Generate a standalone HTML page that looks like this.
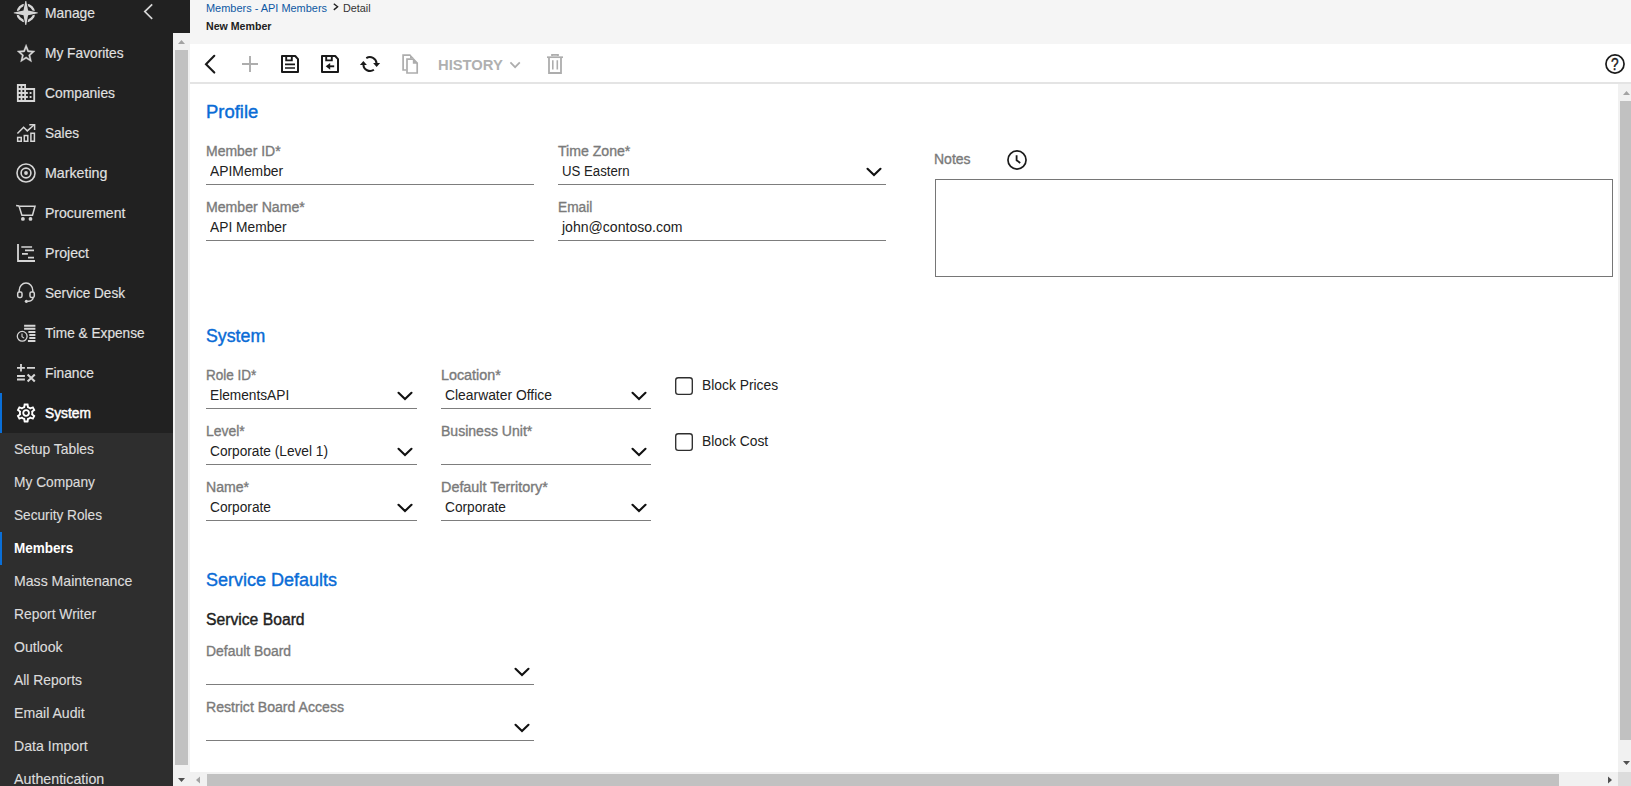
<!DOCTYPE html>
<html lang="en"><head><meta charset="utf-8"><title>Members - API Members &gt; Detail</title>
<style>
html,body{margin:0;padding:0;}
body{width:1631px;height:786px;overflow:hidden;position:relative;background:#fff;font-family:"Liberation Sans", sans-serif;}
.t{position:absolute;white-space:nowrap;line-height:1;transform-origin:0 50%;display:block;}
.b{position:absolute;}
svg{position:absolute;overflow:visible;}

.ul{position:absolute;height:1px;background:#7d7d7d;}

</style></head><body>
<div class="b" style="left:190px;top:0px;width:1441px;height:44px;background:#f5f5f5;"></div>
<div class="b" style="left:190px;top:44px;width:1441px;height:38px;background:#ffffff;"></div>
<div class="b" style="left:190px;top:82px;width:1441px;height:2px;background:#e4e4e4;"></div>
<div class="b" style="left:0px;top:0px;width:190px;height:33px;background:#212121;"></div>
<div class="b" style="left:0px;top:33px;width:173px;height:400px;background:#212121;"></div>
<div class="b" style="left:0px;top:433px;width:173px;height:353px;background:#2e2e2e;"></div>
<div class="b" style="left:0px;top:393px;width:2px;height:40px;background:#0a6fd8;"></div>
<div class="b" style="left:0px;top:532px;width:2px;height:33px;background:#0a6fd8;"></div>
<div class="b" style="left:173px;top:33px;width:17px;height:753px;background:#f1f1f1;"></div>
<div class="b" style="left:175px;top:50px;width:13px;height:715px;background:#c1c1c1;"></div>
<div class="b" style="left:1618px;top:84px;width:13px;height:688px;background:#f1f1f1;"></div>
<div class="b" style="left:1620px;top:101px;width:11px;height:639px;background:#c1c1c1;"></div>
<div class="b" style="left:190px;top:772px;width:1428px;height:14px;background:#f1f1f1;"></div>
<div class="b" style="left:207px;top:774px;width:1352px;height:12px;background:#c1c1c1;"></div>
<div class="b" style="left:1618px;top:772px;width:13px;height:14px;background:#dcdcdc;"></div>
<div class="ul" style="left:206px;top:184px;width:328px"></div>
<div class="ul" style="left:558px;top:184px;width:328px"></div>
<div class="ul" style="left:206px;top:240px;width:328px"></div>
<div class="ul" style="left:558px;top:240px;width:328px"></div>
<div class="ul" style="left:206px;top:408px;width:211px"></div>
<div class="ul" style="left:441px;top:408px;width:210px"></div>
<div class="ul" style="left:206px;top:464px;width:211px"></div>
<div class="ul" style="left:441px;top:464px;width:210px"></div>
<div class="ul" style="left:206px;top:520px;width:211px"></div>
<div class="ul" style="left:441px;top:520px;width:210px"></div>
<div class="ul" style="left:206px;top:684px;width:328px"></div>
<div class="ul" style="left:206px;top:740px;width:328px"></div>
<div class="b" style="left:935px;top:179px;width:676px;height:96px;border:1px solid #767676;background:#fff"></div>
<span class="t" id="t0" style="left:45.3px;top:5.00px;font-size:15px;font-weight:400;color:#e2e2e2;transform:scale(0.9222,1.0);-webkit-text-stroke:0.15px #e2e2e2;">Manage</span>
<span class="t" id="t1" style="left:45.3px;top:45.00px;font-size:15px;font-weight:400;color:#e2e2e2;transform:scale(0.9155,1.0);-webkit-text-stroke:0.15px #e2e2e2;">My Favorites</span>
<span class="t" id="t2" style="left:45.3px;top:85.00px;font-size:15px;font-weight:400;color:#e2e2e2;transform:scale(0.9226,1.0);-webkit-text-stroke:0.15px #e2e2e2;">Companies</span>
<span class="t" id="t3" style="left:45.3px;top:125.00px;font-size:15px;font-weight:400;color:#e2e2e2;transform:scale(0.9059,1.0);-webkit-text-stroke:0.15px #e2e2e2;">Sales</span>
<span class="t" id="t4" style="left:45.3px;top:165.00px;font-size:15px;font-weight:400;color:#e2e2e2;transform:scale(0.9475,1.0);-webkit-text-stroke:0.15px #e2e2e2;">Marketing</span>
<span class="t" id="t5" style="left:45.3px;top:205.00px;font-size:15px;font-weight:400;color:#e2e2e2;transform:scale(0.9362,1.0);-webkit-text-stroke:0.15px #e2e2e2;">Procurement</span>
<span class="t" id="t6" style="left:45.3px;top:245.00px;font-size:15px;font-weight:400;color:#e2e2e2;transform:scale(0.9424,1.0);-webkit-text-stroke:0.15px #e2e2e2;">Project</span>
<span class="t" id="t7" style="left:45.3px;top:285.00px;font-size:15px;font-weight:400;color:#e2e2e2;transform:scale(0.9054,1.0);-webkit-text-stroke:0.15px #e2e2e2;">Service Desk</span>
<span class="t" id="t8" style="left:45.3px;top:325.00px;font-size:15px;font-weight:400;color:#e2e2e2;transform:scale(0.9096,1.0);-webkit-text-stroke:0.15px #e2e2e2;">Time &amp; Expense</span>
<span class="t" id="t9" style="left:45.3px;top:365.00px;font-size:15px;font-weight:400;color:#e2e2e2;transform:scale(0.9180,1.0);-webkit-text-stroke:0.15px #e2e2e2;">Finance</span>
<span class="t" id="t10" style="left:45.3px;top:405.00px;font-size:15px;font-weight:400;color:#ffffff;transform:scale(0.9197,1.0);-webkit-text-stroke:0.5px #ffffff;">System</span>
<span class="t" id="t11" style="left:14.2px;top:441.00px;font-size:15px;font-weight:400;color:#dcdcdc;transform:scale(0.9252,1.0);-webkit-text-stroke:0.15px #dcdcdc;">Setup Tables</span>
<span class="t" id="t12" style="left:14.2px;top:474.00px;font-size:15px;font-weight:400;color:#dcdcdc;transform:scale(0.9167,1.0);-webkit-text-stroke:0.15px #dcdcdc;">My Company</span>
<span class="t" id="t13" style="left:14.2px;top:507.00px;font-size:15px;font-weight:400;color:#dcdcdc;transform:scale(0.9100,1.0);-webkit-text-stroke:0.15px #dcdcdc;">Security Roles</span>
<span class="t" id="t14" style="left:14.2px;top:540.00px;font-size:15px;font-weight:700;color:#ffffff;transform:scale(0.9019,1.0);">Members</span>
<span class="t" id="t15" style="left:14.2px;top:573.00px;font-size:15px;font-weight:400;color:#dcdcdc;transform:scale(0.9396,1.0);-webkit-text-stroke:0.15px #dcdcdc;">Mass Maintenance</span>
<span class="t" id="t16" style="left:14.2px;top:606.00px;font-size:15px;font-weight:400;color:#dcdcdc;transform:scale(0.9222,1.0);-webkit-text-stroke:0.15px #dcdcdc;">Report Writer</span>
<span class="t" id="t17" style="left:14.2px;top:639.00px;font-size:15px;font-weight:400;color:#dcdcdc;transform:scale(0.9380,1.0);-webkit-text-stroke:0.15px #dcdcdc;">Outlook</span>
<span class="t" id="t18" style="left:14.2px;top:672.00px;font-size:15px;font-weight:400;color:#dcdcdc;transform:scale(0.9269,1.0);-webkit-text-stroke:0.15px #dcdcdc;">All Reports</span>
<span class="t" id="t19" style="left:14.2px;top:705.00px;font-size:15px;font-weight:400;color:#dcdcdc;transform:scale(0.9407,1.0);-webkit-text-stroke:0.15px #dcdcdc;">Email Audit</span>
<span class="t" id="t20" style="left:14.2px;top:738.00px;font-size:15px;font-weight:400;color:#dcdcdc;transform:scale(0.9416,1.0);-webkit-text-stroke:0.15px #dcdcdc;">Data Import</span>
<span class="t" id="t21" style="left:14.2px;top:771.00px;font-size:15px;font-weight:400;color:#dcdcdc;transform:scale(0.9497,1.0);-webkit-text-stroke:0.15px #dcdcdc;">Authentication</span>
<span class="t" id="t22" style="left:206.2px;top:3.00px;font-size:11px;font-weight:400;color:#0d58a3;transform:scale(0.9947,1.0);">Members - API Members</span>
<span class="t" id="t23" style="left:343.4px;top:3.00px;font-size:11px;font-weight:400;color:#333333;transform:scale(0.9813,1.0);">Detail</span>
<span class="t" id="t24" style="left:206.2px;top:21.00px;font-size:11px;font-weight:700;color:#212121;transform:scale(0.9652,1.0);">New Member</span>
<span class="t" id="t25" style="left:438.4px;top:57.00px;font-size:15px;font-weight:700;color:#b0b0b0;transform:scale(0.9839,1.0);">HISTORY</span>
<span class="t" id="t26" style="left:206.4px;top:103.00px;font-size:18px;font-weight:400;color:#0a6cd6;transform:scale(1.0249,1.0);-webkit-text-stroke:0.4px #0a6cd6;">Profile</span>
<span class="t" id="t27" style="left:206.2px;top:144.00px;font-size:14px;font-weight:400;color:#7a7a7a;transform:scale(0.9988,1.0);-webkit-text-stroke:0.35px #7a7a7a;">Member ID*</span>
<span class="t" id="t28" style="left:210.4px;top:164.00px;font-size:14px;font-weight:400;color:#212121;transform:scale(0.9902,1.0);">APIMember</span>
<span class="t" id="t29" style="left:206.2px;top:200.00px;font-size:14px;font-weight:400;color:#7a7a7a;transform:scale(1.0078,1.0);-webkit-text-stroke:0.35px #7a7a7a;">Member Name*</span>
<span class="t" id="t30" style="left:210.4px;top:220.00px;font-size:14px;font-weight:400;color:#212121;transform:scale(0.9844,1.0);">API Member</span>
<span class="t" id="t31" style="left:558.4px;top:144.00px;font-size:14px;font-weight:400;color:#7a7a7a;transform:scale(1.0064,1.0);-webkit-text-stroke:0.35px #7a7a7a;">Time Zone*</span>
<span class="t" id="t32" style="left:562.2px;top:164.00px;font-size:14px;font-weight:400;color:#212121;transform:scale(0.9442,1.0);">US Eastern</span>
<span class="t" id="t33" style="left:558.4px;top:200.00px;font-size:14px;font-weight:400;color:#7a7a7a;transform:scale(0.9796,1.0);-webkit-text-stroke:0.35px #7a7a7a;">Email</span>
<span class="t" id="t34" style="left:562.2px;top:220.00px;font-size:14px;font-weight:400;color:#212121;transform:scale(1.0036,1.0);">john@contoso.com</span>
<span class="t" id="t35" style="left:934.4px;top:152.00px;font-size:14px;font-weight:400;color:#7a7a7a;transform:scale(1.0006,1.0);-webkit-text-stroke:0.35px #7a7a7a;">Notes</span>
<span class="t" id="t36" style="left:206.4px;top:327.00px;font-size:18px;font-weight:400;color:#0a6cd6;transform:scale(0.9864,1.0);-webkit-text-stroke:0.4px #0a6cd6;">System</span>
<span class="t" id="t37" style="left:206.2px;top:368.00px;font-size:14px;font-weight:400;color:#7a7a7a;transform:scale(0.9666,1.0);-webkit-text-stroke:0.35px #7a7a7a;">Role ID*</span>
<span class="t" id="t38" style="left:210.2px;top:388.00px;font-size:14px;font-weight:400;color:#212121;transform:scale(0.9785,1.0);">ElementsAPI</span>
<span class="t" id="t39" style="left:206.2px;top:424.00px;font-size:14px;font-weight:400;color:#7a7a7a;transform:scale(0.9969,1.0);-webkit-text-stroke:0.35px #7a7a7a;">Level*</span>
<span class="t" id="t40" style="left:210.2px;top:444.00px;font-size:14px;font-weight:400;color:#212121;transform:scale(0.9782,1.0);">Corporate (Level 1)</span>
<span class="t" id="t41" style="left:206.2px;top:480.00px;font-size:14px;font-weight:400;color:#7a7a7a;transform:scale(1.0071,1.0);-webkit-text-stroke:0.35px #7a7a7a;">Name*</span>
<span class="t" id="t42" style="left:210.2px;top:500.00px;font-size:14px;font-weight:400;color:#212121;transform:scale(0.9797,1.0);">Corporate</span>
<span class="t" id="t43" style="left:441.2px;top:368.00px;font-size:14px;font-weight:400;color:#7a7a7a;transform:scale(1.0241,1.0);-webkit-text-stroke:0.35px #7a7a7a;">Location*</span>
<span class="t" id="t44" style="left:445.2px;top:388.00px;font-size:14px;font-weight:400;color:#212121;transform:scale(0.9907,1.0);">Clearwater Office</span>
<span class="t" id="t45" style="left:441.2px;top:424.00px;font-size:14px;font-weight:400;color:#7a7a7a;transform:scale(1.0028,1.0);-webkit-text-stroke:0.35px #7a7a7a;">Business Unit*</span>
<span class="t" id="t46" style="left:441.2px;top:480.00px;font-size:14px;font-weight:400;color:#7a7a7a;transform:scale(1.0268,1.0);-webkit-text-stroke:0.35px #7a7a7a;">Default Territory*</span>
<span class="t" id="t47" style="left:445.2px;top:500.00px;font-size:14px;font-weight:400;color:#212121;transform:scale(0.9797,1.0);">Corporate</span>
<span class="t" id="t48" style="left:701.8px;top:378.00px;font-size:14px;font-weight:400;color:#212121;transform:scale(0.9879,1.0);">Block Prices</span>
<span class="t" id="t49" style="left:701.8px;top:434.00px;font-size:14px;font-weight:400;color:#212121;transform:scale(0.9892,1.0);">Block Cost</span>
<span class="t" id="t50" style="left:206.4px;top:571.00px;font-size:18px;font-weight:400;color:#0a6cd6;transform:scale(1.0003,1.0);-webkit-text-stroke:0.4px #0a6cd6;">Service Defaults</span>
<span class="t" id="t51" style="left:206.2px;top:612.00px;font-size:16px;font-weight:400;color:#212121;transform:scale(0.9811,1.0);-webkit-text-stroke:0.4px #212121;">Service Board</span>
<span class="t" id="t52" style="left:206.2px;top:644.00px;font-size:14px;font-weight:400;color:#7a7a7a;transform:scale(0.9941,1.0);-webkit-text-stroke:0.35px #7a7a7a;">Default Board</span>
<span class="t" id="t53" style="left:206.2px;top:700.00px;font-size:14px;font-weight:400;color:#7a7a7a;transform:scale(1.0078,1.0);-webkit-text-stroke:0.35px #7a7a7a;">Restrict Board Access</span>
<span class="t" id="t54" style="left:1611.4px;top:57.00px;font-size:16px;font-weight:400;color:#1a1a1a;transform:scale(0.8533,1.0);-webkit-text-stroke:0.4px #1a1a1a;">?</span>
<svg style="left:173px;top:33px" width="17" height="17" viewBox="0 0 17 17"><polygon points="5,11 8.5,7 12,11" fill="#a3a3a3"/></svg>
<svg style="left:173px;top:769px" width="17" height="17" viewBox="0 0 17 17"><polygon points="5,9 12,9 8.5,13" fill="#505050"/></svg>
<svg style="left:1618px;top:84px" width="17" height="17" viewBox="0 0 17 17"><polygon points="5,11 8.5,7 12,11" fill="#a3a3a3"/></svg>
<svg style="left:1618px;top:755px" width="17" height="17" viewBox="0 0 17 17"><polygon points="5,6 12,6 8.5,10" fill="#505050"/></svg>
<svg style="left:190px;top:772px" width="17" height="17" viewBox="0 0 17 17"><polygon points="10,4.5 10,11.5 6,8" fill="#a3a3a3"/></svg>
<svg style="left:1601px;top:772px" width="17" height="17" viewBox="0 0 17 17"><polygon points="7,4.5 7,11.5 11,8" fill="#505050"/></svg>
<svg style="left:866px;top:167px" width="16" height="10" viewBox="0 0 16 10"><polyline points="1.5,1.8 8,8 14.5,1.8" fill="none" stroke="#111" stroke-width="2.1" stroke-linecap="round" stroke-linejoin="miter"/></svg>
<svg style="left:397px;top:391px" width="16" height="10" viewBox="0 0 16 10"><polyline points="1.5,1.8 8,8 14.5,1.8" fill="none" stroke="#111" stroke-width="2.1" stroke-linecap="round" stroke-linejoin="miter"/></svg>
<svg style="left:631px;top:391px" width="16" height="10" viewBox="0 0 16 10"><polyline points="1.5,1.8 8,8 14.5,1.8" fill="none" stroke="#111" stroke-width="2.1" stroke-linecap="round" stroke-linejoin="miter"/></svg>
<svg style="left:397px;top:447px" width="16" height="10" viewBox="0 0 16 10"><polyline points="1.5,1.8 8,8 14.5,1.8" fill="none" stroke="#111" stroke-width="2.1" stroke-linecap="round" stroke-linejoin="miter"/></svg>
<svg style="left:631px;top:447px" width="16" height="10" viewBox="0 0 16 10"><polyline points="1.5,1.8 8,8 14.5,1.8" fill="none" stroke="#111" stroke-width="2.1" stroke-linecap="round" stroke-linejoin="miter"/></svg>
<svg style="left:397px;top:503px" width="16" height="10" viewBox="0 0 16 10"><polyline points="1.5,1.8 8,8 14.5,1.8" fill="none" stroke="#111" stroke-width="2.1" stroke-linecap="round" stroke-linejoin="miter"/></svg>
<svg style="left:631px;top:503px" width="16" height="10" viewBox="0 0 16 10"><polyline points="1.5,1.8 8,8 14.5,1.8" fill="none" stroke="#111" stroke-width="2.1" stroke-linecap="round" stroke-linejoin="miter"/></svg>
<svg style="left:514px;top:667px" width="16" height="10" viewBox="0 0 16 10"><polyline points="1.5,1.8 8,8 14.5,1.8" fill="none" stroke="#111" stroke-width="2.1" stroke-linecap="round" stroke-linejoin="miter"/></svg>
<svg style="left:514px;top:723px" width="16" height="10" viewBox="0 0 16 10"><polyline points="1.5,1.8 8,8 14.5,1.8" fill="none" stroke="#111" stroke-width="2.1" stroke-linecap="round" stroke-linejoin="miter"/></svg>
<svg style="left:0;top:0" width="1631" height="786" viewBox="0 0 1631 786"><polyline points="214.3,55.8 206,64.2 214.3,72.6" fill="none" stroke="#1a1a1a" stroke-width="2.1" stroke-linecap="round"/>
<path d="M242 64h16M250 56v16" fill="none" stroke="#adadad" stroke-width="1.9"/>
<path d="M282 56h13.2l2.8 3.2v12.8h-16z" fill="none" stroke="#1a1a1a" stroke-width="2" stroke-linejoin="round"/><path d="M286.2 56v4.4h5.6v-4.4" fill="none" stroke="#1a1a1a" stroke-width="1.9"/>
<path d="M285 64.4h10M285 68h10" fill="none" stroke="#1a1a1a" stroke-width="1.7"/>
<path d="M322 56h13.2l2.8 3.2v12.8h-16z" fill="none" stroke="#1a1a1a" stroke-width="2" stroke-linejoin="round"/><path d="M326.2 56v4.4h5.6v-4.4" fill="none" stroke="#1a1a1a" stroke-width="1.9"/>
<path d="M328.6 66.3h5.6" fill="none" stroke="#1a1a1a" stroke-width="1.9"/><polygon points="325.7,66.3 330.2,62.9 330.2,69.7" fill="#1a1a1a"/>
<path d="M366.3 58.2A6.7 6.7 0 0 1 376.6 63.6" fill="none" stroke="#1a1a1a" stroke-width="2"/><polygon points="373.1,63 380.1,63 376.6,67" fill="#1a1a1a"/><path d="M373.9 69.8A6.7 6.7 0 0 1 363.4 64.4" fill="none" stroke="#1a1a1a" stroke-width="2"/><polygon points="359.9,65 366.9,65 363.4,61" fill="#1a1a1a"/>
<path d="M406.4 70h-3.3v-14.9h7.2" fill="none" stroke="#adadad" stroke-width="1.7"/><path d="M410 54.3l4.2 4.2h-4.2z" fill="#adadad"/><path d="M407 59.2h6.4l3.8 3.9v9.9h-10.2z" fill="none" stroke="#adadad" stroke-width="1.7"/><path d="M412.8 58.6v5.2h5.2z" fill="#adadad" stroke="none"/>
<polyline points="510.4,62.4 515.1,67.2 519.8,62.4" fill="none" stroke="#adadad" stroke-width="1.7"/>
<path d="M547 57.2h16" stroke="#adadad" stroke-width="1.7" fill="none"/><path d="M552 56v-1.2h6v1.2" stroke="#adadad" stroke-width="1.7" fill="none"/><path d="M549 57.6v15.4h12v-15.4" stroke="#adadad" stroke-width="1.8" fill="none"/><path d="M552.8 60.2v9.4M557.3 60.2v9.4" stroke="#adadad" stroke-width="1.6" fill="none"/>
<rect x="675.7" y="377.7" width="16.6" height="16.6" rx="2.6" fill="#fff" stroke="#2e2e2e" stroke-width="1.35"/>
<rect x="675.7" y="433.7" width="16.6" height="16.6" rx="2.6" fill="#fff" stroke="#2e2e2e" stroke-width="1.35"/>
<circle cx="1615" cy="64" r="9.05" fill="none" stroke="#1a1a1a" stroke-width="1.7"/>
<circle cx="1017" cy="160" r="9.05" fill="none" stroke="#1a1a1a" stroke-width="1.7"/><path d="M1016.6 155.2v5l3.6 2.8" fill="none" stroke="#1a1a1a" stroke-width="1.8"/>
<polyline points="333.8,3.7 337.6,6.8 333.8,9.9" fill="none" stroke="#222" stroke-width="1.4"/><circle cx="25.8" cy="12.9" r="8.2" fill="none" stroke="#d6d6d6" stroke-width="2.4"/><polygon points="25.50,2.30 26.10,2.30 28.10,10.60 36.40,12.60 36.40,13.20 28.10,15.20 26.10,23.50 25.50,23.50 23.50,15.20 15.20,13.20 15.20,12.60 23.50,10.60" fill="#212121" stroke="#212121" stroke-width="2.2" stroke-linejoin="round"/><polygon points="25.35,0.90 26.25,0.90 28.10,10.60 37.80,12.45 37.80,13.35 28.10,15.20 26.25,24.90 25.35,24.90 23.50,15.20 13.80,13.35 13.80,12.45 23.50,10.60" fill="#d6d6d6"/>
<g transform="translate(15.3,42.505) scale(0.9,0.93)"><path fill="#d6d6d6" stroke="#d6d6d6" stroke-width="0.35" d="M22 9.24l-7.19-.62L12 2 9.19 8.63 2 9.24l5.46 4.73L5.82 21 12 17.27 18.18 21l-1.63-7.03L22 9.24zM12 15.4l-3.76 2.27 1-4.28-3.32-2.88 4.38-.38L12 6.1l1.71 4.04 4.38.38-3.32 2.88 1 4.28L12 15.4z"/></g>
<g transform="translate(15.1,81) scale(0.91,1)"><path fill="#d6d6d6" d="M12 7V3H2v18h20V7H12zM6 19H4v-2h2v2zm0-4H4v-2h2v2zm0-4H4V9h2v2zm0-4H4V5h2v2zm4 12H8v-2h2v2zm0-4H8v-2h2v2zm0-4H8V9h2v2zm0-4H8V5h2v2zm10 12h-8v-2h2v-2h-2v-2h2v-2h-2V9h8v10zm-2-8h-2v2h2v-2zm0 4h-2v2h2v-2z"/></g>
<g fill="none" stroke="#d6d6d6" stroke-width="1.5"><rect x="17.65" y="137.45" width="3.6" height="3.8"/><rect x="24.3" y="135.55" width="3.5" height="5.7"/><rect x="30.9" y="133.25" width="3.5" height="8"/><polyline points="17.4,133.5 23.6,127.3 27.3,130.9 34.2,124.8"/><polyline points="29.3,124.7 34.6,124.7 34.6,130"/></g>
<circle cx="26" cy="173" r="9" fill="none" stroke="#d6d6d6" stroke-width="1.6"/><circle cx="26" cy="173" r="4.9" fill="none" stroke="#d6d6d6" stroke-width="1.6"/><circle cx="26" cy="173" r="1.9" fill="#d6d6d6"/>
<g fill="none" stroke="#d6d6d6" stroke-width="1.5"><path d="M16.1,205.5l2.9,0.5l2.9,9.2h10.6l2.5,-9h-15"/></g><circle cx="22.9" cy="218.9" r="1.9" fill="#d6d6d6"/><circle cx="30.5" cy="218.9" r="1.9" fill="#d6d6d6"/>
<g fill="none" stroke="#d6d6d6"><path d="M18,244v17h17" stroke-width="1.8"/><path d="M21.3,247h10.8M25,250.4h9M22,253.9h5.9M28,257.7h6" stroke-width="1.7"/></g>
<g fill="none" stroke="#d6d6d6" stroke-width="1.5"><path d="M19.2,292v-1.6a6.8,7.4 0 0 1 13.6,0v1.6"/><rect x="17.7" y="292.1" width="4.3" height="5.4" rx="1.4"/><rect x="30" y="292.1" width="4.3" height="5.4" rx="1.4"/><path d="M33.2,297.6a5.2,4 0 0 1 -5.6,3.7"/></g><circle cx="26.4" cy="301.3" r="1.6" fill="#d6d6d6"/>
<g fill="none" stroke="#d6d6d6"><path d="M24.1,325.7h11.3M24.1,328.7h11.3M28.4,332h7M29.3,335.1h6.1M29.3,338.1h6.1M27.9,341h7.5" stroke-width="2"/><circle cx="22.2" cy="336.3" r="4.9" stroke-width="1.3" fill="#212121"/><path d="M22,333.6v3l2.1,1.5" stroke-width="1.1"/></g>
<g fill="none" stroke="#d6d6d6" stroke-width="1.8"><path d="M17,367.8h7.9M21,364v7.5M27,367.8h8M17,376h7.9M17,379.5h7.9"/><path d="M27.6,374.6l7.2,6.8M34.8,374.6l-7.2,6.8" stroke-width="2.1"/></g>
<g transform="translate(14.700000000000003,401.6) scale(0.95)"><path fill="#ffffff" d="M19.43 12.98c.04-.32.07-.64.07-.98 0-.34-.03-.66-.07-.98l2.11-1.65c.19-.15.24-.42.12-.64l-2-3.46c-.09-.16-.26-.25-.44-.25-.06 0-.12.01-.17.03l-2.49 1c-.52-.4-1.08-.73-1.69-.98l-.38-2.65C14.46 2.18 14.25 2 14 2h-4c-.25 0-.46.18-.49.42l-.38 2.65c-.61.25-1.17.59-1.69.98l-2.49-1c-.06-.02-.12-.03-.18-.03-.17 0-.34.09-.43.25l-2 3.46c-.13.22-.07.49.12.64l2.11 1.65c-.04.32-.07.65-.07.98 0 .33.03.66.07.98l-2.11 1.65c-.19.15-.24.42-.12.64l2 3.46c.09.16.26.25.44.25.06 0 .12-.01.17-.03l2.49-1c.52.4 1.08.73 1.69.98l.38 2.65c.03.24.24.42.49.42h4c.25 0 .46-.18.49-.42l.38-2.65c.61-.25 1.17-.59 1.69-.98l2.49 1c.06.02.12.03.18.03.17 0 .34-.09.43-.25l2-3.46c.12-.22.07-.49-.12-.64l-2.11-1.65zm-1.98-1.71c.04.31.05.52.05.73 0 .21-.02.43-.05.73l-.14 1.13.89.7 1.08.84-.7 1.21-1.27-.51-1.04-.42-.9.68c-.43.32-.84.56-1.25.73l-1.06.43-.16 1.13-.2 1.35h-1.4l-.19-1.35-.16-1.13-1.06-.43c-.43-.18-.83-.41-1.23-.71l-.91-.7-1.06.43-1.27.51-.7-1.21 1.08-.84.89-.7-.14-1.13c-.03-.31-.05-.54-.05-.74s.02-.43.05-.73l.14-1.13-.89-.7-1.08-.84.7-1.21 1.27.51 1.04.42.9-.68c.43-.32.84-.56 1.25-.73l1.06-.43.16-1.13.2-1.35h1.39l.19 1.35.16 1.13 1.06.43c.43.18.83.41 1.23.71l.91.7 1.06-.43 1.27-.51.7 1.21-1.07.85-.89.7.14 1.13zM12 8c-2.21 0-4 1.79-4 4s1.790 4 4 4 4-1.790 4-4-1.790-4-4-4zm0 6c-1.100 0-2-.9-2-2s.9-2 2-2 2 .9 2 2-.9 2-2 2z"/></g>
<polyline points="152.2,4.4 144.8,11.6 152.2,18.8" fill="none" stroke="#d6d6d6" stroke-width="1.7"/></svg>
</body></html>
